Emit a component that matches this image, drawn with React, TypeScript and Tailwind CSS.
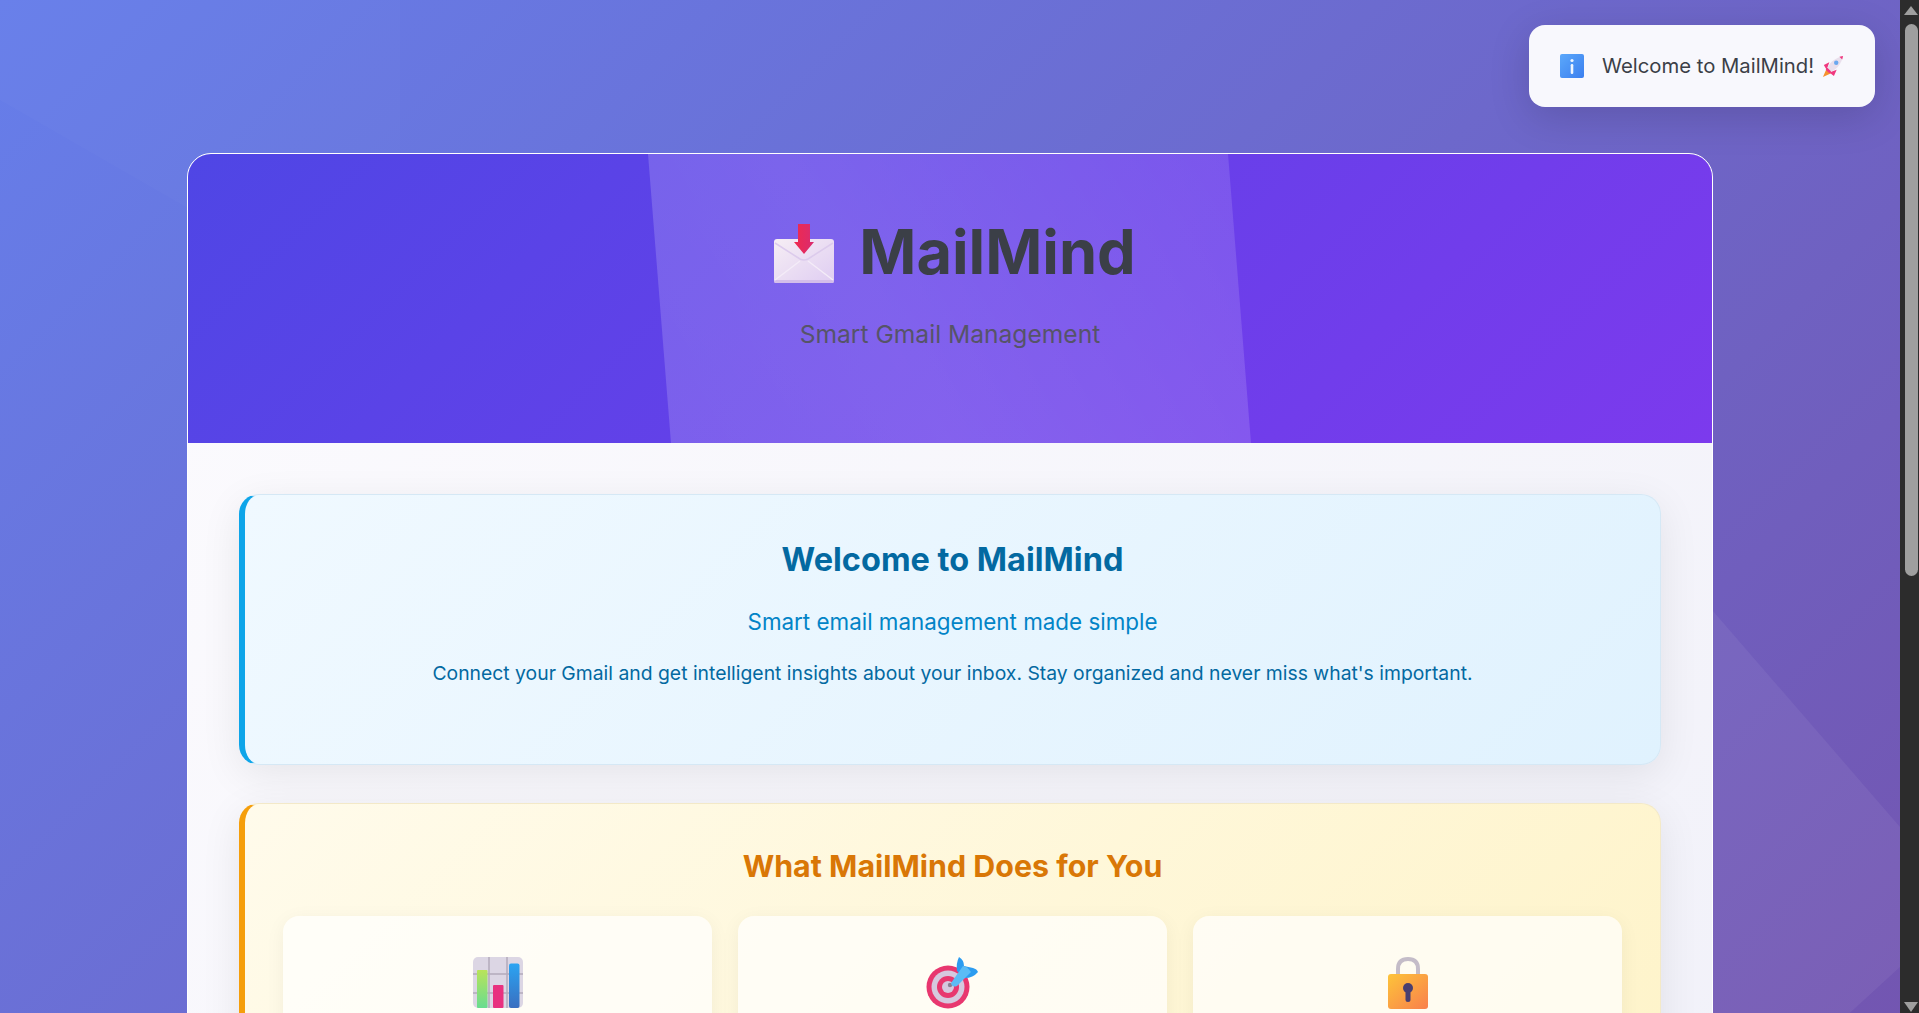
import React from 'react'

const InfoIcon = () => (
  <svg width="26" height="26" viewBox="0 0 26 26" className="shrink-0">
    <defs>
      <linearGradient id="infoBg" x1="0" y1="0" x2="1" y2="1">
        <stop offset="0" stopColor="#5ba8fb" />
        <stop offset="1" stopColor="#3b7fef" />
      </linearGradient>
    </defs>
    <rect x="1" y="1" width="24" height="24" rx="2" fill="url(#infoBg)" />
    <circle cx="13" cy="7.5" r="1.6" fill="#eef5ff" />
    <rect x="11.7" y="11" width="2.6" height="10" rx="1.2" fill="#eef5ff" />
  </svg>
)

const RocketIcon = () => (
  <svg width="22" height="22" viewBox="0 0 24 24" className="shrink-0">
    <path d="M5 15 L1 24 L10 20 Z" fill="#f5922f" />
    <path d="M8 8 L2 11 L5 16 Z M16 16 L13 23 L8 19 Z" fill="#f0387f" />
    <path d="M6 14 C9 7 15 3 23 1 C21 9 17 15 10 18 Z" fill="#e9dfec" />
    <path d="M19 2 L23 1 L22 5 Z" fill="#f0387f" />
    <path d="M6 14 L10 18 L8 20 L4 16 Z" fill="#f0387f" />
    <circle cx="15.5" cy="8.5" r="2.4" fill="#6aa8ef" />
  </svg>
)

const InboxIcon = () => (
  <svg width="60" height="60" viewBox="0 0 60 60" className="mt-[3px] shrink-0">
    <defs>
      <linearGradient id="envBg" x1="0" y1="0" x2="1" y2="1">
        <stop offset="0" stopColor="#f6eef4" />
        <stop offset="1" stopColor="#dfcdf2" />
      </linearGradient>
      <linearGradient id="arrowBg" x1="0" y1="0" x2="1" y2="0">
        <stop offset="0" stopColor="#ef2a4e" />
        <stop offset="1" stopColor="#d92b70" />
      </linearGradient>
    </defs>
    <rect x="0" y="15" width="60" height="44" rx="3" fill="url(#envBg)" />
    <rect x="0" y="56" width="60" height="3" rx="1.5" fill="#d3bdea" />
    <path d="M1 19 L26 35 Q30 37 34 35 L59 19" fill="none" stroke="#dccbec" strokeWidth="1.5" />
    <path d="M1 56 L26 37 M59 56 L34 37" fill="none" stroke="#f4ecf8" strokeWidth="1.5" />
    <path d="M24 0 H36 V18 H40 L30 30 L20 18 H24 Z" fill="url(#arrowBg)" />
  </svg>
)

const ChartIcon = () => (
  <svg width="50" height="51" viewBox="0 0 50 51" className="shrink-0">
    <defs>
      <linearGradient id="barGreen" x1="0" y1="0" x2="0" y2="1">
        <stop offset="0" stopColor="#b9e35a" />
        <stop offset="1" stopColor="#68dc90" />
      </linearGradient>
      <linearGradient id="barBlue" x1="0" y1="0" x2="0" y2="1">
        <stop offset="0" stopColor="#2ba4f2" />
        <stop offset="1" stopColor="#3a6fc0" />
      </linearGradient>
    </defs>
    <rect width="50" height="51" rx="5" fill="#dcd6e4" />
    <path d="M16 0 V51 M34 0 V51 M0 17 H50 M0 36 H50" stroke="#b3aabb" strokeWidth="1.5" />
    <rect x="4" y="13" width="10.500" height="38" rx="1" fill="url(#barGreen)" />
    <rect x="20" y="28" width="10.500" height="23" rx="1" fill="#e8317f" />
    <rect x="36" y="6.500" width="10.500" height="44.500" rx="2" fill="url(#barBlue)" />
  </svg>
)

const TargetIcon = () => (
  <svg width="53" height="52" viewBox="0 0 53 52" className="shrink-0">
    <circle cx="22" cy="30" r="21.500" fill="#e8376f" />
    <circle cx="22" cy="30" r="16.500" fill="#d6c8de" />
    <circle cx="22" cy="30" r="11" fill="#e8376f" />
    <circle cx="22" cy="30" r="6" fill="#d6c8de" />
    <circle cx="24" cy="28" r="2.200" fill="#8a7f92" />
    <path d="M33 0 Q38 3 38 9 L47 11 Q51 12 52 15 Q47 21 39 21 L31 14 Q30 6 33 0 Z" fill="#2c9cf0" />
    <path d="M25 26 L37 9 Q41 9 45 15 L31 29 Q26 31 25 26 Z" fill="#5bbcf5" />
  </svg>
)

const LockIcon = () => (
  <svg width="42" height="52" viewBox="0 0 42 52" className="shrink-0">
    <defs>
      <linearGradient id="lockBg" x1="0" y1="0" x2="1" y2="1">
        <stop offset="0" stopColor="#fdc43a" />
        <stop offset="1" stopColor="#f97f4c" />
      </linearGradient>
    </defs>
    <path d="M11 20 V12 Q11 2 21 2 Q31 2 31 12 V20" fill="none" stroke="#c4bcc8" strokeWidth="4" />
    <rect x="1" y="17" width="40" height="35" rx="3" fill="url(#lockBg)" />
    <circle cx="21" cy="31" r="5" fill="#4a3f70" />
    <rect x="18.500" y="31" width="5" height="14" rx="2.500" fill="#4a3f70" />
  </svg>
)

const ScrollBar = () => (
  <aside className="flex h-full w-[19px] shrink-0 flex-col items-center bg-[#2c2c2c] pl-[3px]">
    <svg width="14" height="10" viewBox="0 0 14 10" className="mt-[6px] block">
      <path d="M7 0 L14 9 H0 Z" fill="#9f9f9f" />
    </svg>
    <div className="mt-[8px] h-[552px] w-[13px] rounded-full bg-[#9f9f9f]" />
    <svg width="14" height="10" viewBox="0 0 14 10" className="mt-auto mb-[1px] block">
      <path d="M0 0 H14 L7 10 Z" fill="#9f9f9f" />
    </svg>
  </aside>
)

const features = [
  { id: 'chart', icon: <ChartIcon /> },
  { id: 'target', icon: <TargetIcon /> },
  { id: 'lock', icon: <LockIcon /> },
]

export default function App() {
  return (
    <div className="flex h-[1013px] w-full overflow-hidden font-['Inter',sans-serif]">
      <main className="relative h-full flex-1 overflow-hidden">
        <div className="relative h-[1790px] bg-[linear-gradient(135deg,#667eea_0%,#764ba2_100%)] pt-[153px]">
          {/* faint shapes behind the card */}
          <div className="absolute inset-0 bg-white/[0.02] [clip-path:polygon(0_0,400px_0,400px_330px,0_100px)]" />
          <div className="absolute inset-0 bg-white/[0.06] [clip-path:polygon(1500px_365px,1900px_827px,1900px_967px,1700px_1150px,1400px_1150px)]" />

          <div className="relative mx-auto w-[1526px] overflow-hidden rounded-[24px] border border-white bg-[linear-gradient(135deg,#fcfbfe,#f1f1f9)]">
            <header className="relative h-[289px] bg-[linear-gradient(135deg,#4f46e5_0%,#7c3aed_100%)] pt-[48px] text-center">
              <div className="absolute inset-0 bg-[linear-gradient(60deg,rgba(255,255,255,0.13),rgba(255,255,255,0.18)_45%,rgba(255,255,255,0.06))] [clip-path:polygon(460px_0,1040px_0,1063px_100%,483px_100%)]" />
              <h1 className="relative flex items-center justify-center gap-[25px] pl-[10px] text-[61.3px] leading-[100px] font-bold text-[#3b3f47]">
                <InboxIcon />
                MailMind
              </h1>
              <p className="relative mt-[16px] text-[24.6px] leading-[32px] text-[#565468]">Smart Gmail Management</p>
            </header>

            <div className="px-[51px] pt-[51px]">
              <section className="h-[271px] rounded-[20px] border border-[#d5e8f5] border-l-[6px] border-l-[#0ea5e9] bg-[linear-gradient(135deg,#f0f9ff,#e0f2fe)] pt-[44px] text-center shadow-[0_10px_40px_rgba(0,0,0,0.08)]">
                <h2 className="text-[32.5px] leading-[42px] font-bold text-[#0369a1]">Welcome to MailMind</h2>
                <p className="mt-[25px] text-[22.4px] leading-[32px] text-[#0284c7]">Smart email management made simple</p>
                <p className="mt-[21px] text-[19.35px] leading-[28px] text-[#0369a1]">
                  Connect your Gmail and get intelligent insights about your inbox. Stay organized and never miss what's important.
                </p>
              </section>

              <section className="mt-[38px] rounded-[20px] border border-[#f3e9c8] border-l-[6px] border-l-[#f59e0b] bg-[linear-gradient(135deg,#fffbeb,#fef3c7)] px-[38px] pt-[42px] text-center shadow-[0_10px_40px_rgba(0,0,0,0.08)]">
                <h2 className="text-[30.4px] leading-[40px] font-bold text-[#d97706]">What MailMind Does for You</h2>
                <div className="mt-[30px] grid grid-cols-3 gap-[26px]">
                  {features.map((item) => (
                    <div key={item.id} className="flex h-[300px] justify-center rounded-[16px] bg-white/70 pt-[41px] shadow-[0_4px_20px_rgba(0,0,0,0.05)]">
                      {item.icon}
                    </div>
                  ))}
                </div>
              </section>
            </div>
          </div>
        </div>

        {/* toast */}
        <div className="absolute top-[25px] right-[25px] flex h-[82px] w-[346px] items-center gap-[17px] rounded-[16px] bg-[#f8f8fd] pl-[30px] text-[20.3px] text-[#3b3f47] shadow-[0_10px_40px_rgba(0,0,0,0.15)]">
          <InfoIcon />
          <span className="flex items-center gap-[8px]">
            Welcome to MailMind!
            <RocketIcon />
          </span>
        </div>
      </main>
      <ScrollBar />
    </div>
  )
}
